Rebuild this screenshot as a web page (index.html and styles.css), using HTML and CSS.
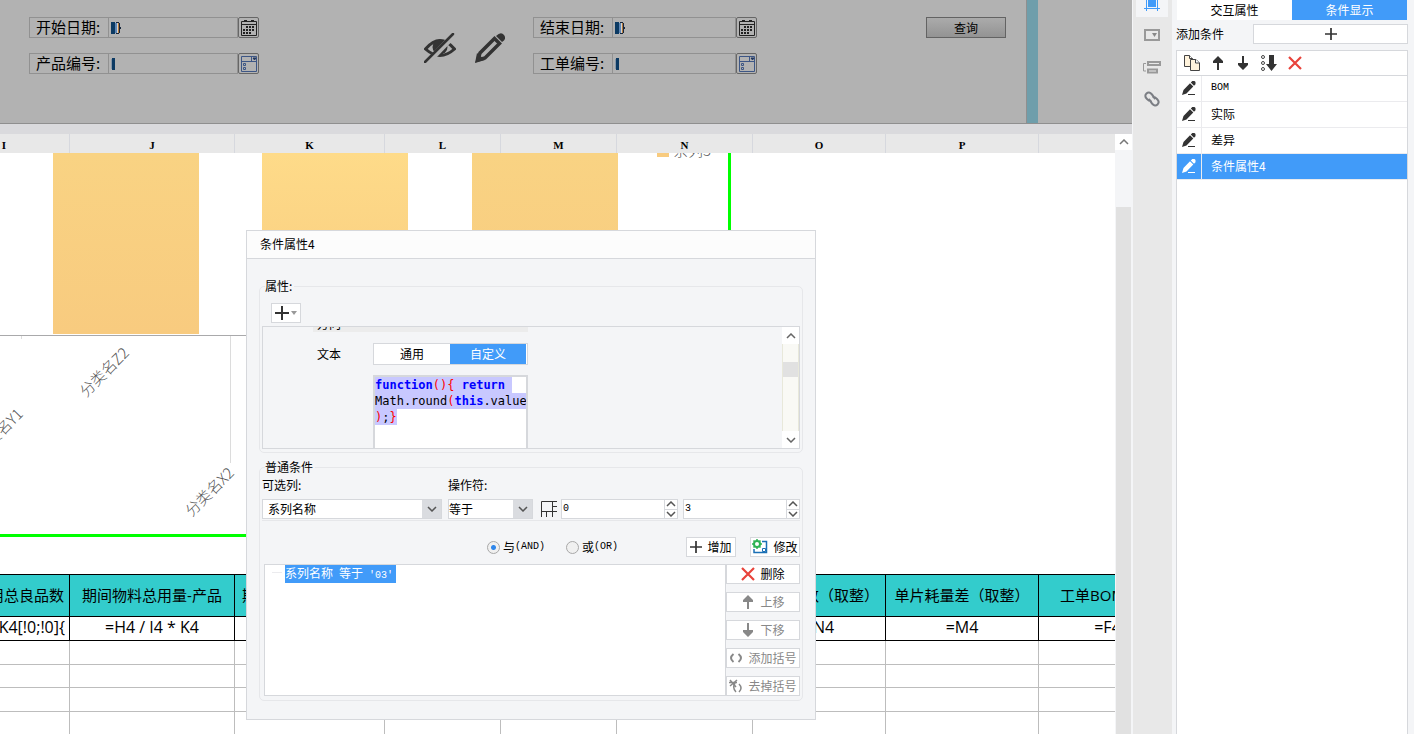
FILE: index.html
```html
<!DOCTYPE html>
<html lang="zh-CN">
<head>
    <meta charset="UTF-8">
    <meta name="viewport" content="width=device-width, initial-scale=1.0">
    <title>条件属性</title>
    <link rel="stylesheet" href="styles.css">
</head>
<body>

    <svg class="sprite" aria-hidden="true">
        <symbol id="calendar" viewBox="0 0 16 16">
            <path d="M.5 1.5h15v14H.5zM0 4.5h16M3 .5h3M10 .5h3" fill="none" stroke="#222"/>
            <path d="M5 6h2v2H5zM8 6h2v2H8zM11 6h2v2h-2zM2 9h2v2H2zM5 9h2v2H5zM8 9h2v2H8zM11 9h2v2h-2zM2 12h2v2H2zM5 12h2v2H5zM8 12h2v2H8z" fill="#222"/>
        </symbol>
        <symbol id="form" viewBox="0 0 16 16">
            <path d="M.5.5h15v15H.5zM0 5.5h16M10.5 0v5M2.500 7.500h2v2h-2zM2.500 11.500h2v2h-2z" fill="none" stroke="#3d5685"/>
            <path d="M12 2h3l-1.500 2z" fill="#20365f" stroke="#20365f"/>
        </symbol>
        <symbol id="pen" viewBox="0 0 14 15">
            <path d="M0 14l1.500-5L8 2.200l3.300 3.300L4.500 12.500zM8.800 1.400L10.300 0h2.200L13.500 1v2.200L12 4.700z" fill="currentColor"/>
            <path d="M6 13.500h7" stroke="currentColor"/>
        </symbol>
        <symbol id="arrow-up" viewBox="0 0 14 14">
            <path d="M7 0l5 5v2H8v7H6V7H2V5z" fill="currentColor"/>
        </symbol>
        <symbol id="arrow-down" viewBox="0 0 14 14">
            <path d="M7 14l5-5V7H8V0H6v7H2v2z" fill="currentColor"/>
        </symbol>
        <symbol id="cross" viewBox="0 0 14 14">
            <path d="M1 1l12 12M13 1L1 13" stroke="#e8433b" stroke-width="2.200"/>
        </symbol>
        <symbol id="plus" viewBox="0 0 14 14">
            <path d="M7 0v14M0 7h14" stroke="#333" stroke-width="2"/>
        </symbol>
        <symbol id="chev-up" viewBox="0 0 10 6">
            <path d="M1 5l4-4 4 4" fill="none" stroke="currentColor" stroke-width="1.500"/>
        </symbol>
        <symbol id="chev-down" viewBox="0 0 10 6">
            <path d="M1 1l4 4 4-4" fill="none" stroke="currentColor" stroke-width="1.500"/>
        </symbol>
        <symbol id="token" viewBox="0 0 10 12">
            <path d="M0 0h4v12H0z" fill="#0c3a63"/>
            <path d="M4 1h2v10H4z" fill="#5d86b5"/>
            <path d="M5 0h3v1H5zM5 11h3v1H5zM8 1h1v4h1v2H9v4H8z" fill="#16263c"/>
            <path d="M6 1h1v10H6z" fill="#d9d3cc"/>
            <path d="M7 1h1v10H7z" fill="#b0763a"/>
        </symbol>
        <symbol id="caret" viewBox="0 0 10 12">
            <path d="M1 0h3v12H1z" fill="#0c3a63"/>
            <path d="M0 1h1v10H0z" fill="#8697a8"/>
        </symbol>
    </svg>

    <main class="workspace">
        <div class="param-pane">
            <form class="param-form">
                <div class="param-group group-left">
                    <div class="param-field">
                        <label for="startDate">开始日期:</label>
                        <div class="param-value"><svg class="token"><use href="#token"/></svg><input type="text" id="startDate"></div>
                        <button type="button" class="picker" aria-label="选择日期"><svg><use href="#calendar"/></svg></button>
                    </div>
                    <div class="param-field">
                        <label for="productNo">产品编号:</label>
                        <div class="param-value"><svg class="token"><use href="#caret"/></svg><input type="text" id="productNo"></div>
                        <button type="button" class="picker" aria-label="选择产品"><svg><use href="#form"/></svg></button>
                    </div>
                </div>
                <div class="param-tools">
                    <svg width="32" height="30" viewBox="0 0 32 30">
                        <path d="M1.500 16Q16-1 30.500 16 16 29 1.500 16z" fill="none" stroke="#333" stroke-width="3"/>
                        <circle cx="16" cy="14" r="7.500" fill="#333"/>
                        <path d="M2 31L31 1" stroke="#b2b2b2" stroke-width="6"/>
                        <path d="M1 29L29 1" stroke="#333" stroke-width="2.500" stroke-linecap="round"/>
                    </svg>
                    <svg width="30" height="30" viewBox="0 0 30 30">
                        <path d="M3 27l2-7L19.500 5.500l5 5L10 25z" fill="none" stroke="#333" stroke-width="3.500"/>
                        <path d="M0 30l2-10 8 7z" fill="#333"/>
                        <path d="M21 3Q26-2 29 2t-2 7z" fill="#333"/>
                    </svg>
                </div>
                <div class="param-group group-right">
                    <div class="param-field">
                        <label for="endDate">结束日期:</label>
                        <div class="param-value"><svg class="token"><use href="#token"/></svg><input type="text" id="endDate"></div>
                        <button type="button" class="picker" aria-label="选择日期"><svg><use href="#calendar"/></svg></button>
                    </div>
                    <div class="param-field">
                        <label for="orderNo">工单编号:</label>
                        <div class="param-value"><svg class="token"><use href="#caret"/></svg><input type="text" id="orderNo"></div>
                        <button type="button" class="picker" aria-label="选择工单"><svg><use href="#form"/></svg></button>
                    </div>
                </div>
                <button type="button" class="query-btn">查询</button>
            </form>
            <div class="param-edge"></div>
        </div>

        <div class="sheet-area">
            <div class="sheet">
                <table class="grid letters">
                    <colgroup>
                        <col class="c-i"><col class="c-j"><col class="c-k"><col class="c-l"><col class="c-l"><col class="c-n"><col class="c-o"><col class="c-p"><col class="c-q">
                    </colgroup>
                    <tr><th>I</th><th>J</th><th>K</th><th>L</th><th>M</th><th>N</th><th>O</th><th>P</th><th></th></tr>
                </table>

                <svg class="chart" width="731" height="384" viewBox="0 0 731 384">
                    <defs>
                        <linearGradient id="barA" x2="0" y2="1"><stop offset="0" stop-color="#f9d383"/><stop offset="1" stop-color="#f8cb7f"/></linearGradient>
                        <linearGradient id="barB" x2="0" y2="1"><stop offset="0" stop-color="#fedb89"/><stop offset="1" stop-color="#f8cb7f"/></linearGradient>
                    </defs>
                    <path d="M53 0h146v181H53z" fill="url(#barA)"/>
                    <path d="M262 0h146v181H262z" fill="url(#barB)"/>
                    <path d="M472 0h146v181H472z" fill="url(#barA)"/>
                    <path d="M657 0h12v4h-12z" fill="#f8cb7f"/>
                    <text class="chart-text" x="673" y="3">系列3</text>
                    <path d="M0 182.500h660" stroke="#a9a9ab"/>
                    <path d="M21.500 183v3M230.500 183v127" stroke="#dcdcdc"/>
                    <text class="chart-text" text-anchor="end" transform="translate(130 201) rotate(-45)">分类名Z2</text>
                    <text class="chart-text" text-anchor="end" transform="translate(24 262) rotate(-45)">分类名Y1</text>
                    <text class="chart-text" text-anchor="end" transform="translate(235 321) rotate(-45)">分类名X2</text>
                    <path d="M0 382.500h729.500V0" fill="none" stroke="#00ff00" stroke-width="3"/>
                </svg>

                <table class="grid cells">
                    <colgroup>
                        <col class="c-i"><col class="c-j"><col class="c-k"><col class="c-l"><col class="c-l"><col class="c-n"><col class="c-o"><col class="c-p"><col class="c-q">
                    </colgroup>
                    <tr class="head"><th>期间领用总良品数</th><th>期间物料总用量-产品</th><th>期间物料总用量差值</th><th></th><th></th><th></th><th>单片耗数（取整）</th><th>单片耗量差（取整）</th><th>工单BOM用量</th></tr>
                    <tr class="formula"><td class="cut">=K4[!0;!0]{</td><td>=H4 / I4 * K4</td><td></td><td></td><td></td><td></td><td>=N4</td><td>=M4</td><td>=F4</td></tr>
                    <tr><td></td><td></td><td></td><td></td><td></td><td></td><td></td><td></td><td></td></tr>
                    <tr class="short"><td></td><td></td><td></td><td></td><td></td><td></td><td></td><td></td><td></td></tr>
                    <tr><td></td><td></td><td></td><td></td><td></td><td></td><td></td><td></td><td></td></tr>
                    <tr><td></td><td></td><td></td><td></td><td></td><td></td><td></td><td></td><td></td></tr>
                </table>
            </div>
            <div class="sheet-scroll">
                <button type="button" aria-label="向上滚动"><svg width="10" height="6"><use href="#chev-up"/></svg></button>
                <div class="sheet-thumb"></div>
            </div>
        </div>
    </main>

    <nav class="icon-bar">
        <button type="button" class="active" aria-label="单元格属性">
            <svg width="16" height="17" viewBox="0 0 16 17"><path d="M0 14.500h16M2.500 0v17M13.500 0v17" stroke="#419bf9"/><path d="M4 0h8v13H4z" fill="#419bf9"/></svg>
        </button>
        <button type="button" aria-label="控件设置">
            <svg width="16" height="12" viewBox="0 0 16 12"><path d="M1 1h14v10H1z" fill="none" stroke="#999" stroke-width="2"/><path d="M8 4h5l-2.500 4z" fill="#888"/></svg>
        </button>
        <button type="button" aria-label="条件属性">
            <svg width="18" height="13" viewBox="0 0 18 13"><path d="M5 1h12v3H5zM5 8.500h9v3H5z" fill="none" stroke="#999" stroke-width="2"/><path d="M3 2.500H.5v7.500H3" fill="none" stroke="#999"/></svg>
        </button>
        <button type="button" aria-label="超级链接">
            <svg width="16" height="16" viewBox="0 0 16 16"><path d="M7.500 9.500Q6 11 3 8T2.500 2.500 8 3.500t2 4.500M8.500 6.500Q10 5 13 8t.5 5.500T8 12.500t-2-4.500" fill="none" stroke="#7b7e84" stroke-width="2"/></svg>
        </button>
    </nav>

    <aside class="panel">
        <div class="panel-tabs">
            <button type="button">交互属性</button>
            <button type="button" class="active">条件显示</button>
        </div>
        <div class="panel-add">
            <span>添加条件</span>
            <button type="button" aria-label="添加条件"><svg width="12" height="12"><use href="#plus"/></svg></button>
        </div>
        <div class="panel-box">
            <div class="panel-tools">
                <button type="button" aria-label="复制">
                    <svg width="16" height="16" viewBox="0 0 16 16"><path d="M.5.500h5l3 3v8h-8z" fill="#fff3dc" stroke="#444"/><path d="M6.500 4.500h5.500l3.500 3.500v7.500h-9z" fill="#fff3dc" stroke="#444"/><path d="M5.500.5v3h3M11.500 4.500V8h4" fill="#fff" stroke="#444"/></svg>
                </button>
                <button type="button" aria-label="上移"><svg width="14" height="14"><use href="#arrow-up"/></svg></button>
                <button type="button" aria-label="下移"><svg width="14" height="14"><use href="#arrow-down"/></svg></button>
                <button type="button" aria-label="排序">
                    <svg width="16" height="16" viewBox="0 0 16 16"><g fill="none" stroke="#444"><circle cx="2" cy="2" r="1.500"/><circle cx="2" cy="8" r="1.500"/><circle cx="2" cy="14" r="1.500"/></g><path d="M8 0h5v9h3l-5.500 7L5 9h3z" fill="#333"/></svg>
                </button>
                <button type="button" aria-label="删除"><svg width="14" height="14"><use href="#cross"/></svg></button>
            </div>
            <ul class="cond-list">
                <li><span class="pen"><svg width="14" height="15"><use href="#pen"/></svg></span><span class="name half">BOM</span></li>
                <li><span class="pen"><svg width="14" height="15"><use href="#pen"/></svg></span><span class="name">实际</span></li>
                <li><span class="pen"><svg width="14" height="15"><use href="#pen"/></svg></span><span class="name">差异</span></li>
                <li class="selected"><span class="pen"><svg width="14" height="15"><use href="#pen"/></svg></span><span class="name">条件属性4</span></li>
            </ul>
        </div>
    </aside>

    <div class="dialog" role="dialog" aria-labelledby="dialogTitle">
        <h2 id="dialogTitle">条件属性4</h2>
        <div class="dialog-body">
            <fieldset class="attrs">
                <legend>属性:</legend>
                <button type="button" class="btn add-attr" aria-label="添加属性">
                    <svg width="14" height="14"><use href="#plus"/></svg>
                    <svg width="6" height="4" viewBox="0 0 6 4"><path d="M0 0h6L3 4z" fill="#999"/></svg>
                </button>
                <div class="attr-view">
                    <div class="attr-content">
                        <div class="prev-row"><span>方向</span></div>
                        <div class="text-row">
                            <span>文本</span>
                            <div class="segment">
                                <button type="button">通用</button>
                                <button type="button" class="active">自定义</button>
                            </div>
                        </div>
                        <div class="code" contenteditable="true" spellcheck="false"><div><mark><b>function</b><i>(){</i> <b>return</b> </mark></div><div><mark>Math.round<i>(</i><b>this</b>.value</mark></div><div><mark><i>)</i>;<i>}</i></mark></div></div>
                    </div>
                    <div class="attr-scroll">
                        <button type="button" aria-label="向上"><svg width="10" height="6"><use href="#chev-up"/></svg></button>
                        <div class="attr-track"><div class="attr-thumb"></div></div>
                        <button type="button" aria-label="向下"><svg width="10" height="6"><use href="#chev-down"/></svg></button>
                    </div>
                </div>
            </fieldset>

            <fieldset class="conds">
                <legend>普通条件</legend>
                <div class="cond-labels">
                    <label for="column">可选列:</label>
                    <label for="operator">操作符:</label>
                </div>
                <div class="cond-inputs">
                    <div class="drop drop-column">
                        <select id="column"><option>系列名称</option></select>
                        <svg width="10" height="6"><use href="#chev-down"/></svg>
                    </div>
                    <div class="drop drop-operator">
                        <select id="operator"><option>等于</option></select>
                        <svg width="10" height="6"><use href="#chev-down"/></svg>
                    </div>
                    <svg class="cell-icon" width="16" height="16" viewBox="0 0 16 16"><path d="M.5 16V.5H16M0 10.500h16M11.500 0v16M11 5.500h5M5.500 10v6" fill="none" stroke="#333"/></svg>
                    <div class="spin">
                        <input type="text" value="0" aria-label="序号">
                        <div class="spin-btns">
                            <button type="button" aria-label="增"><svg width="10" height="6"><use href="#chev-up"/></svg></button>
                            <button type="button" aria-label="减"><svg width="10" height="6"><use href="#chev-down"/></svg></button>
                        </div>
                    </div>
                    <div class="spin">
                        <input type="text" value="3" aria-label="值">
                        <div class="spin-btns">
                            <button type="button" aria-label="增"><svg width="10" height="6"><use href="#chev-up"/></svg></button>
                            <button type="button" aria-label="减"><svg width="10" height="6"><use href="#chev-down"/></svg></button>
                        </div>
                    </div>
                </div>
                <div class="cond-logic">
                    <label><input type="radio" name="logic" checked>与<span class="half">(AND)</span></label>
                    <label><input type="radio" name="logic">或<span class="half">(OR)</span></label>
                    <button type="button" class="btn push"><svg width="12" height="12"><use href="#plus"/></svg>增加</button>
                    <button type="button" class="btn">
                        <svg width="16" height="16" viewBox="0 0 16 16"><path d="M10 2.500h4.500v11H2V10" fill="none" stroke="#1a6fb5" stroke-width="1.500"/><path d="M10.500 9.500h3v3h-3z" fill="#fff" stroke="#1a6fb5"/><circle cx="5" cy="5" r="3" fill="none" stroke="#2eb354" stroke-width="2"/><path d="M5 0v2M5 8v2M0 5h2M8 5h2M1.500 1.500l1.500 1.500M7 7l1.500 1.500M8.500 1.500L7 3M3 7L1.500 8.500" stroke="#2eb354" stroke-width="1.500"/></svg>修改
                    </button>
                </div>
                <div class="cond-result">
                    <div class="tree"><span class="node">系列名称<span class="half"> </span>等于<span class="half"> '03'</span></span></div>
                    <div class="tree-btns">
                        <button type="button" class="btn"><svg width="14" height="14"><use href="#cross"/></svg>删除</button>
                        <button type="button" class="btn" disabled><svg width="14" height="14"><use href="#arrow-up"/></svg>上移</button>
                        <button type="button" class="btn" disabled><svg width="14" height="14"><use href="#arrow-down"/></svg>下移</button>
                        <button type="button" class="btn" disabled><svg width="14" height="14" viewBox="0 0 14 14"><path d="M4.500 3Q-.5 7 4.500 11M9.500 3Q14.500 7 9.500 11" fill="none" stroke="#888" stroke-width="2"/></svg>添加括号</button>
                        <button type="button" class="btn" disabled><svg width="14" height="14" viewBox="0 0 14 14"><path d="M1 1l6 7M8 1L1 7M0 3.500h8M6 4Q3 9 7 13M10 5Q14 9 10 13" fill="none" stroke="#888" stroke-width="1.500"/></svg>去掉括号</button>
                    </div>
                </div>
            </fieldset>
        </div>
    </div>

</body>
</html>
```
FILE: styles.css
```css
* {
    margin: 0;
    padding: 0;
    box-sizing: border-box;
}

body {
    display: flex;
    height: 100vh;
    overflow: hidden;
    background: #fff;
    color: #000;
    font: 12px/16px "Noto Sans CJK SC", sans-serif;
}

button, input, select {
    font: inherit;
    color: inherit;
    border: none;
    background: none;
    border-radius: 0;
}

svg {
    display: block;
    flex: none;
}

.sprite {
    position: absolute;
    width: 0;
    height: 0;
}

/* latin letters in half-width cells */
.half {
    font-family: "Liberation Mono", monospace;
    font-size: 10px;
}

.workspace {
    flex: 1;
    min-width: 0;
    display: flex;
    flex-direction: column;
}

/* parameter pane */
.param-pane {
    display: flex;
    height: 124px;
    background: #b2b2b2;
    border-bottom: 1px solid #8f8f8f;
}

.param-form {
    flex: 1;
    display: flex;
    align-items: flex-start;
    padding: 17px 20px 0 29px;
    border-right: 1px solid #8f8f8f;
}

.param-edge {
    width: 105px;
    border-left: 11px solid #6f9eab;
}

.param-group {
    display: flex;
    flex-direction: column;
    gap: 15px;
}

.group-left {
    width: 230px;
    margin-right: 165px;
}

.group-right {
    width: 224px;
    margin-left: 28px;
}

.param-field {
    display: flex;
    height: 21px;
}

.param-field label {
    width: 80px;
    padding-left: 6px;
    border: 1px solid #919191;
    font-size: 15px;
    line-height: 18px;
}

.param-value {
    flex: 1;
    display: flex;
    align-items: center;
    min-width: 0;
    padding-left: 2px;
    border: 1px solid #919191;
    border-left: none;
}

.param-value input {
    flex: 1;
    min-width: 0;
}

.token {
    width: 10px;
    height: 12px;
}

.picker {
    display: flex;
    align-items: center;
    justify-content: center;
    width: 21px;
    border: 1px solid #666;
    border-radius: 2px;
}

.picker svg {
    width: 16px;
    height: 16px;
}

.param-tools {
    display: flex;
    gap: 19px;
    margin-top: 16px;
}

.query-btn {
    width: 80px;
    height: 21px;
    margin-left: auto;
    background: linear-gradient(#ababab, #939393);
    border: 1px solid #636363;
    line-height: 17px;
}

/* sheet */
.sheet-area {
    flex: 1;
    min-height: 0;
    display: flex;
    border-top: 10px solid #dadadd;
}

.sheet {
    flex: 1;
    min-width: 0;
    overflow: hidden;
}

.grid {
    table-layout: fixed;
    width: 1238px;
    margin-left: -61px;
    border-spacing: 0;
}

.grid th, .grid td {
    overflow: hidden;
    white-space: nowrap;
    text-align: center;
    font-weight: normal;
}

.c-i { width: 131px; }
.c-j { width: 165px; }
.c-k { width: 150px; }
.c-l { width: 116px; }
.c-n { width: 136px; }
.c-o { width: 133px; }
.c-p { width: 153px; }
.c-q { width: 138px; }

.letters th {
    height: 19px;
    padding-top: 3px;
    background: #e8e8e8;
    border-right: 1px solid #d6d8de;
    font: bold 11px/16px "Liberation Serif", serif;
}

.chart-text {
    font-size: 15px;
    font-weight: 300;
    fill: #555;
}

.cells {
    margin-top: 37px;
    font-family: "Open Sans", "Noto Sans CJK SC", sans-serif;
    font-size: 15px;
    line-height: 20px;
}

.cells td {
    height: 24px;
    border-right: 1px solid #bdbdbd;
    border-bottom: 1px solid #bdbdbd;
}

.cells .short td {
    height: 23px;
}

.cells .head th {
    height: 43px;
    padding-bottom: 2px;
    background: #33cccc;
    border: solid #000;
    border-width: 1px 1px 1px 0;
}

.cells .formula td {
    padding-bottom: 3px;
    border-color: #000;
    font-size: 16px;
}

.cells .formula td.cut {
    padding-right: 4px;
    text-align: right;
}

.sheet-scroll {
    display: flex;
    flex-direction: column;
    width: 17px;
    background: #f4f5f7;
    color: #777;
}

.sheet-scroll button {
    display: flex;
    align-items: center;
    justify-content: center;
    height: 16px;
    background: #fff;
}

.sheet-thumb {
    flex: 1;
    margin: 57px 1px 0;
    background: #e1e1e1;
}

/* icon bar */
.icon-bar {
    display: flex;
    flex-direction: column;
    align-items: center;
    width: 40px;
    padding-right: 1px;
    background: #e8e8e8;
    border-left: 1px solid #f4f5f7;
}

.icon-bar button {
    display: flex;
    align-items: center;
    justify-content: center;
    width: 32px;
    height: 32px;
}

.icon-bar .active {
    height: 17px;
    margin-bottom: 2px;
    align-items: flex-end;
    padding-bottom: 6px;
    background: #f4f5f7;
    overflow: hidden;
}

/* right panel */
.panel {
    display: flex;
    flex-direction: column;
    width: 242px;
    padding: 0 6px 0 4px;
    background: #f4f5f7;
}

.panel-tabs {
    display: flex;
    height: 20px;
    padding: 0 1px;
}

.panel-tabs button {
    flex: 1;
    background: #fff;
}

.panel-tabs .active {
    background: #419bf9;
    color: #fff;
}

.panel-add {
    display: flex;
    align-items: center;
    justify-content: space-between;
    margin: 4px 0 6px;
}

.panel-add button {
    display: flex;
    align-items: center;
    justify-content: center;
    width: 155px;
    height: 20px;
    background: #fff;
    border: 1px solid #d6d8dc;
}

.panel-box {
    flex: 1;
    background: #fff;
    border: 1px solid #d6d8dc;
    border-bottom: none;
}

.panel-tools {
    display: flex;
    align-items: center;
    gap: 11px;
    height: 25px;
    padding-left: 7px;
    border-bottom: 1px solid #d6d8dc;
    color: #333;
}

.cond-list {
    list-style: none;
}

.cond-list li {
    display: flex;
    height: 26px;
    border-bottom: 1px solid #ebebee;
    line-height: 24px;
}

.pen {
    display: flex;
    align-items: center;
    width: 25px;
    padding-left: 5px;
    border-right: 1px solid #ebebee;
    color: #333;
}

.name {
    padding-left: 9px;
}

.cond-list .selected, .selected .pen {
    background: #419bf9;
    color: #fff;
}

/* dialog */
.dialog {
    position: absolute;
    top: 230px;
    left: 246px;
    width: 570px;
    background: #f4f5f7;
    border: 1px solid #d6d8dc;
}

.dialog h2 {
    height: 28px;
    padding-left: 13px;
    background: #fcfcfc;
    border-bottom: 1px solid #d6d8dc;
    font-size: 12px;
    font-weight: normal;
    line-height: 26px;
}

.dialog-body {
    padding: 19px 12px 18px;
}

fieldset {
    border: 1px solid #e6e7ea;
    border-radius: 5px;
    min-width: 0;
}

legend {
    margin-left: 3px;
    padding: 0 2px 0 0;
}

.attrs {
    padding: 9px 2px 3px;
}

.conds {
    margin-top: 6px;
    padding: 2px 2px 4px;
}

.btn {
    display: flex;
    align-items: center;
    justify-content: center;
    height: 20px;
    gap: 5px;
    background: #fff;
    border: 1px solid #d6d8dc;
    white-space: nowrap;
}

.btn:disabled {
    color: #888;
}

.add-attr {
    width: 30px;
    gap: 2px;
    margin: 0 0 3px 9px;
}

.attr-view {
    display: flex;
    height: 123px;
    border: 1px solid #d6d8dc;
    overflow: hidden;
}

.attr-content {
    flex: 1;
    padding-left: 50px;
}

.prev-row {
    display: flex;
    align-items: flex-end;
    width: 215px;
    height: 5px;
    padding-left: 4px;
    background: #ececec;
    overflow: hidden;
}

.text-row {
    display: flex;
    align-items: center;
    justify-content: space-between;
    width: 215px;
    margin: 11px 0 10px;
    padding-left: 4px;
}

.segment {
    display: flex;
    width: 155px;
    height: 22px;
    padding-right: 1px;
    background: #fff;
    border: 1px solid #d6d8dc;
}

.segment button {
    flex: 1;
}

.segment .active {
    background: #419bf9;
    color: #fff;
}

.code {
    width: 155px;
    height: 100px;
    margin-left: 60px;
    background: #fff;
    border: 2px solid #d6d8dc;
    font: 12px/16px "DejaVu Sans Mono", monospace;
    white-space: pre;
    overflow: hidden;
}

.code mark {
    display: inline-block;
    background: #c8c8ff;
    color: #000;
}

.code b {
    color: #0000ff;
}

.code i {
    color: #ff0000;
    font-style: normal;
}

.attr-scroll {
    display: flex;
    flex-direction: column;
    width: 17px;
    color: #666;
}

.attr-scroll button {
    display: flex;
    align-items: center;
    justify-content: center;
    height: 17px;
    background: #fff;
}

.attr-track {
    flex: 1;
    padding-top: 18px;
    background: #f9f9f5;
    border: solid #e8e8da;
    border-width: 0 1px;
}

.attr-thumb {
    height: 15px;
    background: #e1e1e1;
}

.cond-labels {
    display: flex;
    margin-bottom: 6px;
}

.cond-labels label {
    width: 186px;
}

.cond-inputs {
    display: flex;
    align-items: center;
    height: 22px;
    padding-bottom: 1px;
    border-bottom: 1px solid #e6e7ea;
}

.drop {
    position: relative;
    flex: none;
    height: 20px;
    margin-right: 6px;
    color: #555;
}

.drop select {
    appearance: none;
    width: 100%;
    height: 20px;
    background: linear-gradient(#dadce0, #dadce0) right / 19px 100% no-repeat #fff;
    border: 1px solid #d6d8dc;
    color: #000;
}

.drop svg {
    position: absolute;
    top: 7px;
    right: 5px;
    pointer-events: none;
}

.drop-column {
    width: 180px;
}

.drop-column select {
    padding-left: 5px;
}

.drop-operator {
    width: 85px;
}

.cell-icon {
    margin: 0 4px 0 2px;
}

.spin {
    flex: 1;
    display: flex;
    min-width: 0;
    height: 20px;
    background: #fff;
    border: 1px solid #d6d8dc;
}

.spin + .spin {
    margin-left: 5px;
}

.spin input {
    flex: 1;
    min-width: 0;
    padding-left: 1px;
    font-family: "Liberation Mono", monospace;
    font-size: 10px;
}

.spin-btns {
    display: flex;
    flex-direction: column;
    width: 13px;
    border-left: 1px solid #d6d8dc;
    color: #555;
}

.spin-btns button {
    flex: 1;
    display: flex;
    align-items: center;
    justify-content: center;
}

.spin-btns button + button {
    border-top: 1px solid #d6d8dc;
}

.cond-logic {
    display: flex;
    align-items: center;
    margin: 16px 0 7px;
    padding-left: 225px;
}

.cond-logic label {
    display: flex;
    align-items: center;
    width: 79px;
}

.cond-logic input {
    appearance: none;
    width: 13px;
    height: 13px;
    margin-right: 3px;
    border: 1px solid #a8a8a8;
    border-radius: 50%;
    background: #f0f0f0;
}

.cond-logic input:checked {
    background: radial-gradient(circle, #2f86ea 2px, #f0f0f0 3px);
}

.cond-logic .btn {
    width: 50px;
}

.cond-logic .push {
    margin: 0 14px 0 auto;
}

.cond-result {
    display: flex;
    height: 132px;
    padding-left: 2px;
}

.tree {
    flex: 1;
    padding-left: 20px;
    background: linear-gradient(#ebebee, #ebebee) 7px 7px / 10px 1px no-repeat #fff;
    border: 1px solid #d6d8dc;
}

.tree .node {
    display: inline-block;
    padding-right: 3px;
    background: #419bf9;
    color: #fff;
    line-height: 15px;
}

.tree-btns {
    display: flex;
    flex-direction: column;
    justify-content: space-between;
    width: 74px;
}
```
